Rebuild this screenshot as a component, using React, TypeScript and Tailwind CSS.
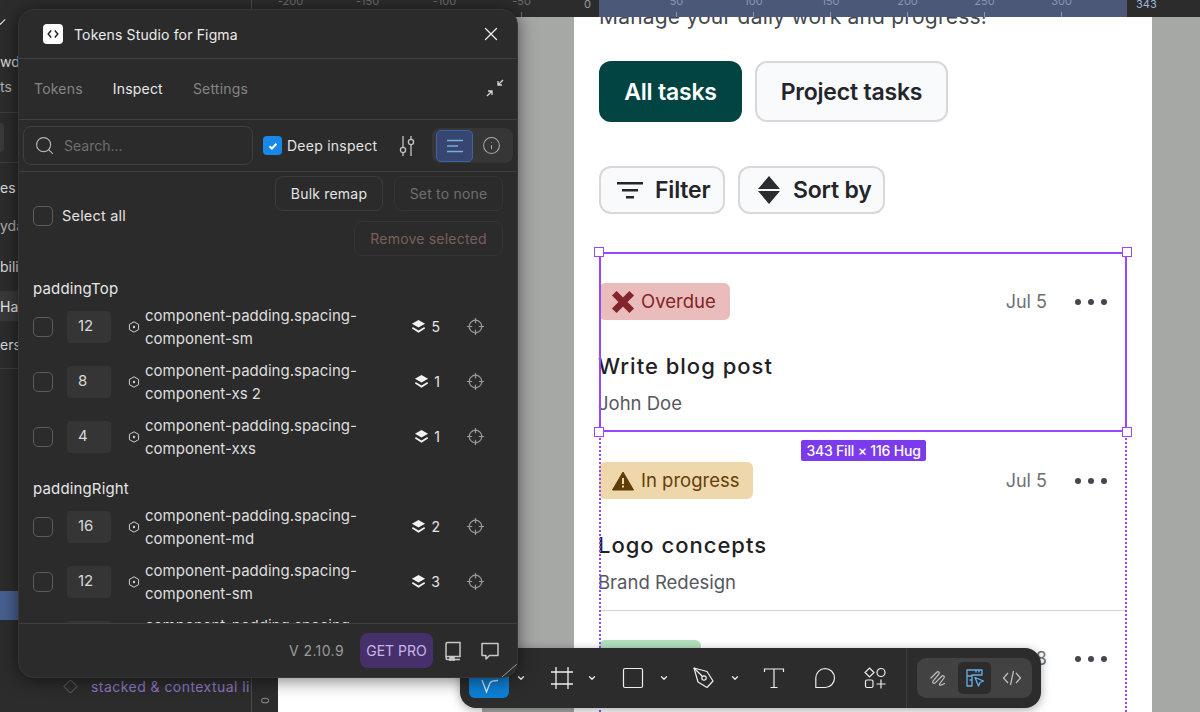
import { ChevronDown, Info, Search, X } from "lucide-react";
import type { ReactNode } from "react";

const font = "font-['Inter','Liberation_Sans',sans-serif]";

const sidebarScraps = [
  { text: "wd", className: "mt-[53px] h-[18px]" },
  { text: "ts", className: "mt-[7px] h-[18px]" },
];

const tokenGroups = [
  {
    title: "paddingTop",
    className: "mt-[22px]",
    rows: [
      { value: "12", token: "component-padding.spacing-component-sm", count: "5" },
      { value: "8", token: "component-padding.spacing-component-xs 2", count: "1" },
      { value: "4", token: "component-padding.spacing-component-xxs", count: "1" },
    ],
  },
  {
    title: "paddingRight",
    className: "mt-[14px]",
    rows: [
      { value: "16", token: "component-padding.spacing-component-md", count: "2" },
      { value: "12", token: "component-padding.spacing-component-sm", count: "3" },
      { value: "8", token: "component-padding.spacing-component-xs 2", count: "1" },
    ],
  },
];

function Checkbox() {
  return <span className="h-5 w-5 shrink-0 rounded-[5px] border-[1.5px] border-[#5c5c5c]" />;
}

function TokenRow({ value, token, count }: { value: string; token: string; count: string }) {
  return (
    <div className="flex h-[55px] items-center">
      <Checkbox />
      <div className="ml-[14px] flex h-8 w-11 shrink-0 items-center rounded bg-[#353535] pl-[11px] text-[15px] text-[#d8d8d8]">
        {value}
      </div>
      <svg viewBox="0 0 12 12" className="ml-[17px] h-3 w-3 shrink-0 text-[#d0d0d0]" fill="none" stroke="currentColor">
        <path d="M6 .8l4.6 2.6v5.2L6 11.2 1.4 8.6V3.4z" />
        <circle cx="6" cy="6" r="1.2" fill="currentColor" stroke="none" />
      </svg>
      <div className="ml-[5px] w-[240px] shrink-0 text-[15px] leading-[23px] text-[#dedede]">{token}</div>
      <div className="flex w-[55px] shrink-0 items-center justify-end gap-[5px] text-[14px] text-[#e6e6e6]">
        <svg viewBox="0 0 16 16" className="h-[15px] w-[15px]" fill="#f2f2f2">
          <path d="M8 1l7 4-7 4-7-4z" />
          <path d="M1.8 8.6L8 12.2l6.2-3.6 .8 1.4L8 14.6 1 10z" />
        </svg>
        {count}
      </div>
      <svg viewBox="0 0 20 20" className="ml-[26px] h-[19px] w-[19px] shrink-0 text-[#9a9a9a]" fill="none" stroke="currentColor" strokeWidth="1.3">
        <circle cx="10" cy="10" r="6.6" />
        <path d="M10 1v5.5M10 13.5V19M1 10h5.5M13.5 10H19" />
      </svg>
    </div>
  );
}

function TokensPlugin() {
  return (
    <div className="absolute left-[18px] top-[9px] z-30 flex h-[669px] w-[500px] flex-col overflow-hidden rounded-[16px] border border-[#363636] bg-[#2b2b2b] shadow-[0_2px_18px_rgba(0,0,0,0.55)]">
      <div className="flex h-[49px] shrink-0 items-center border-b border-[#3f3f3f] pl-6 pr-[15px]">
        <span className="flex h-5 w-5 items-center justify-center rounded-[4px] bg-white">
          <svg viewBox="0 0 12 12" className="h-3 w-3" fill="none" stroke="#222" strokeWidth="1.5">
            <path d="M4.2 2.6L1.2 6l3 3.4M7.8 2.6L10.8 6l-3 3.4" />
          </svg>
        </span>
        <span className="ml-[11px] text-[14px] tracking-[0.15px] text-[#ececec]">Tokens Studio for Figma</span>
        <X className="ml-auto h-[22px] w-[22px] text-[#eeeeee]" strokeWidth={1.4} />
      </div>

      <div className="flex h-[61px] shrink-0 items-center gap-[30px] border-b border-[#3f3f3f] pb-[2px] pl-[15px] pr-[12px] text-[14px] tracking-[0.2px] text-[#858585]">
        <span>Tokens</span>
        <span className="text-[#e8e8e8]">Inspect</span>
        <span>Settings</span>
        <svg viewBox="0 0 20 20" className="ml-auto h-5 w-5 text-[#d8d8d8]" fill="none" stroke="currentColor" strokeWidth="1.3">
          <path d="M18 2l-5 5M13 3v4h4M2 18l5-5M3 13h4v4" />
        </svg>
      </div>

      <div className="flex h-[52px] shrink-0 items-center border-b border-[#3f3f3f] pl-1">
        <div className="flex h-[39px] w-[230px] items-center rounded-lg border border-[#404040] pl-[10px] text-[14px] text-[#6f6f6f]">
          <Search className="h-[21px] w-[21px] text-[#b5b5b5]" strokeWidth={1.3} />
          <span className="ml-[9px]">Search...</span>
        </div>
        <span className="ml-[10px] flex h-[19px] w-[19px] items-center justify-center rounded-[4px] bg-[#1888e8]">
          <svg viewBox="0 0 12 12" className="h-3 w-3" fill="none" stroke="#fff" strokeWidth="2">
            <path d="M2.5 6.2l2.4 2.3 4.6-4.8" />
          </svg>
        </span>
        <span className="ml-[5px] text-[14px] tracking-[0.25px] text-[#e4e4e4]">Deep inspect</span>
        <svg viewBox="0 0 18 24" className="ml-[21px] h-6 w-[18px] text-[#c4c4c4]" fill="none" stroke="currentColor" strokeWidth="1.3">
          <path d="M5 2v11M5 19v3M13 2v3M13 11v11" />
          <circle cx="5" cy="16" r="2.6" />
          <circle cx="13" cy="8" r="2.6" />
        </svg>
        <div className="ml-[16px] flex h-[35px] w-[81px] items-center rounded-lg bg-[#363636] pl-1">
          <span className="flex h-[32px] w-[37px] items-center justify-center rounded-[5px] border border-[#3d64a4] bg-[#364670]">
            <svg viewBox="0 0 18 14" className="h-[14px] w-[18px]" fill="none" stroke="#7fa8dc" strokeWidth="1.4">
              <path d="M1 1.5h16M1 7h11M1 12.5h16" />
            </svg>
          </span>
          <Info className="ml-[9px] h-[19px] w-[19px] text-[#a8a8a8]" strokeWidth={1.3} />
        </div>
      </div>

      <div className="min-h-0 flex-1 overflow-hidden pl-[14px]">
        <div className="flex items-center justify-between pr-[14px] pt-[4px]">
          <div className="flex items-center gap-[9px] text-[14.5px] tracking-[0.2px] text-[#e2e2e2]">
            <Checkbox />
            Select all
          </div>
          <div className="flex flex-col items-end gap-[10px] text-[14px] tracking-[0.2px]">
            <div className="flex gap-[11px]">
              <span className="flex h-[35px] w-[108px] items-center justify-center rounded-lg border border-[#3d3d3d] text-[#e4e4e4]">Bulk remap</span>
              <span className="flex h-[35px] w-[109px] items-center justify-center rounded-lg border border-[#353535] text-[#6f6f6f]">Set to none</span>
            </div>
            <span className="flex h-[35px] w-[149px] items-center justify-center rounded-lg border border-[#353535] text-[#7a5f5c]">Remove selected</span>
          </div>
        </div>
        {tokenGroups.map((group) => (
          <div key={group.title} className={group.className}>
            <div className="h-[21px] text-[15px] leading-[21px] tracking-[0.15px] text-[#e6e6e6]">{group.title}</div>
            {group.rows.map((row) => (
              <TokenRow key={row.value + row.count} {...row} />
            ))}
          </div>
        ))}
      </div>

      <div className="flex h-[54px] shrink-0 items-center justify-end border-t border-[#3f3f3f] pr-[17px]">
        <span className="text-[14px] tracking-[0.4px] text-[#9a9a9a]">V 2.10.9</span>
        <span className="ml-[16px] flex h-[35px] w-[73px] items-center justify-center rounded-lg bg-[#46306c] text-[14px] text-[#c8b4e8]">GET PRO</span>
        <svg viewBox="0 0 18 20" className="ml-[11px] h-5 w-[18px] text-[#c8c8c8]" fill="none" stroke="currentColor" strokeWidth="1.5">
          <path d="M2 16V3a1.5 1.5 0 0 1 1.5-1.5H16v14H3.5A1.5 1.5 0 0 0 2 17a1.5 1.5 0 0 0 1.5 1.5H16" />
          <path d="M6 15.5v4l2-1 2 1v-4" fill="currentColor" />
        </svg>
        <svg viewBox="0 0 20 20" className="ml-[18px] h-5 w-5 text-[#c8c8c8]" fill="none" stroke="currentColor" strokeWidth="1.5">
          <path d="M2 2.5h16v12H9.5L6 18v-3.5H2z" strokeLinejoin="round" />
        </svg>
      </div>
      <svg viewBox="0 0 16 14" className="absolute bottom-0 right-0 h-[14px] w-4 text-[#9a9a9a]" fill="none" stroke="currentColor">
        <path d="M1 14L16 1" />
      </svg>
    </div>
  );
}

function Sidebar() {
  return (
    <div className="flex h-full w-[252px] shrink-0 flex-col overflow-hidden border-r border-[#4c4c4c] bg-[#2c2c2c] text-[14px] text-[#dcdcdc]">
      <svg viewBox="0 0 10 10" className="ml-[-2px] mt-[17px] h-2 w-2 shrink-0 text-[#dcdcdc]" fill="none" stroke="currentColor" strokeWidth="1.5">
        <path d="M0 6l3 3 6-6" />
      </svg>
      <div className="-mt-[25px]">
        {sidebarScraps.map((scrap) => (
          <div key={scrap.text} className={`${scrap.className} leading-[18px] ${scrap.text === "ts" ? "text-[#b0b0b0]" : ""}`}>
            {scrap.text}
          </div>
        ))}
      </div>
      <div className="mt-[16px] h-px w-[18px] bg-[#3f3f3f]" />
      <div className="mt-[10px] h-[29px] w-1 rounded-r bg-[#3a3a3a]" />
      <div className="mt-[10px] h-px w-[18px] bg-[#3f3f3f]" />
      <div className="mt-[16px] h-[18px] leading-[18px]">es</div>
      <div className="mt-[20px] h-[18px] leading-[18px] text-[#b0b0b0]">yda</div>
      <div className="mt-[23px] h-[18px] leading-[18px]">bili</div>
      <div className="mt-[15px] flex h-[30px] w-[18px] items-center bg-[#3a3a3a] text-[#e8e8e8]">Ha</div>
      <div className="mt-[15px] h-[18px] leading-[18px]">ers</div>
      <div className="mt-[14px] h-px w-[18px] bg-[#3f3f3f]" />
      <div className="mt-[222px] h-[29px] w-[18px] bg-[#47608f]" />
      <div className="mt-[56px] flex items-center pl-[63px] text-[14px] tracking-[0.45px] text-[#8f76c4]">
        <svg viewBox="0 0 16 16" className="h-[15px] w-[15px] shrink-0 text-[#6f6a80]" fill="none" stroke="currentColor">
          <path d="M8 1l7 7-7 7-7-7z" />
        </svg>
        <span className="ml-[13px] whitespace-nowrap">stacked &amp; contextual lis</span>
      </div>
    </div>
  );
}

function RulerCell({ label }: { label: string }) {
  return (
    <div className="flex h-[17px] w-[77px] shrink-0 flex-col items-center justify-between overflow-hidden">
      <span className="-mt-[5px] text-[11px] leading-[13px]">{label}</span>
      <span className="h-[5px] w-px bg-current" />
    </div>
  );
}

function TopRuler() {
  return (
    <div className="relative z-10 flex h-[17px] shrink-0 bg-[#2c2c2c] text-[#6e6e6e]">
      {["-200", "-150", "-100", "-50"].map((label) => (
        <RulerCell key={label} label={label} />
      ))}
      <div className="flex h-[17px] w-[39px] justify-end overflow-hidden pr-[8px] text-[11px] leading-[8px] text-[#9a9a9a]">0</div>
      <div className="flex h-[17px] w-[528px] bg-[#4b5878] pl-[39px] text-[#8b96b0]">
        {["50", "100", "150", "200", "250", "300"].map((label) => (
          <RulerCell key={label} label={label} />
        ))}
      </div>
      <div className="overflow-hidden pl-[9px] text-[11px] leading-[8px] text-[#9fb6de]">343</div>
    </div>
  );
}

function TaskCard({
  badge,
  badgeClass,
  icon,
  title,
  subtitle,
  className,
}: {
  badge: string;
  badgeClass: string;
  icon: ReactNode;
  title: string;
  subtitle: string;
  className: string;
}) {
  return (
    <div className={className}>
      <div className="flex items-center pr-5">
        <div className={`flex h-[37px] items-center gap-[6px] rounded-[6px] pl-3 text-[18.5px] ${badgeClass}`}>
          {icon}
          {badge}
        </div>
        <span className="ml-auto text-[18px] text-[#6b6f76]">Jul 5</span>
        <Dots />
      </div>
      <div className="-ml-px mt-[31px] h-[30px] text-[22px] font-medium leading-[30px] tracking-[1px] text-[#1f2125]">{title}</div>
      <div className="-ml-px mt-[9px] h-[26px] text-[18.5px] leading-[26px] text-[#55585e]">{subtitle}</div>
    </div>
  );
}

function Dots() {
  return (
    <span className="ml-[28px] flex gap-[7px]">
      <span className="h-[6px] w-[6px] rounded-full bg-[#44474d]" />
      <span className="h-[6px] w-[6px] rounded-full bg-[#44474d]" />
      <span className="h-[6px] w-[6px] rounded-full bg-[#44474d]" />
    </span>
  );
}

function Handle({ className }: { className: string }) {
  return <span className={`absolute h-[10px] w-[10px] border border-[#9747ff] bg-white ${className}`} />;
}

function PhoneFrame() {
  return (
    <div className="relative ml-[296px] h-[720px] w-[578px] bg-white px-[25px] pt-[2px]">
      <p className="-mt-[17px] h-[30px] whitespace-nowrap text-[21px] leading-[30px] tracking-[0.2px] text-[#44474d]">
        Manage your daily work and progress!
      </p>
      <div className="mt-[29px] flex gap-[13px] text-[23px] font-semibold tracking-[-0.2px]">
        <button className="h-[61px] w-[143px] rounded-[12px] bg-[#024442] pt-[2px] text-white">All tasks</button>
        <button className="h-[61px] w-[193px] rounded-[12px] border-2 border-[#d6d8dc] bg-[#f9fafc] pt-[2px] text-[#23252a]">Project tasks</button>
      </div>
      <div className="mt-[44px] flex gap-[13px] text-[23px] font-semibold tracking-[-0.2px] text-[#23252a]">
        <button className="flex h-[48px] w-[126px] items-center gap-[12px] rounded-[12px] border-2 border-[#d6d8dc] bg-[#f9fafc] pl-[16px]">
          <svg viewBox="0 0 26 20" className="h-5 w-[26px]" fill="#23252a">
            <path d="M0 2h26v2.4H0zM5 9h16v2.4H5zM9 16h8v2.4H9z" />
          </svg>
          Filter
        </button>
        <button className="flex h-[48px] w-[147px] items-center gap-[13px] rounded-[12px] border-2 border-[#d6d8dc] bg-[#f9fafc] pl-[18px]">
          <svg viewBox="0 0 22 28" className="h-7 w-[22px]" fill="#2a2c31">
            <path d="M11 0l11 13H0zM0 15h22L11 28z" />
          </svg>
          Sort by
        </button>
      </div>

      <div className="relative mt-[38px]">
        <TaskCard
          className="h-[180px] pt-[31px]"
          badge="Overdue"
          badgeClass="w-[131px] bg-[#eabcbc] text-[#7f2528]"
          icon={
            <svg viewBox="0 0 22 22" className="h-6 w-6" fill="none" stroke="#83252a" strokeWidth="6">
              <path d="M3 3l16 16M19 3L3 19" />
            </svg>
          }
          title="Write blog post"
          subtitle="John Doe"
        />
        <TaskCard
          className="h-[179px] border-b border-[#cfd0d2] pt-[30px]"
          badge="In progress"
          badgeClass="w-[154px] bg-[#eed7ab] text-[#65400c]"
          icon={
            <svg viewBox="0 0 22 20" className="h-5 w-6">
              <path d="M11 1l10.5 18H.5z" fill="#5e3c08" stroke="#5e3c08" strokeLinejoin="round" />
              <path d="M10 7h2v6h-2zM10 14.5h2v2h-2z" fill="#eed7ab" />
            </svg>
          }
          title="Logo concepts"
          subtitle="Brand Redesign"
        />
        <div className="flex items-start pr-5 pt-[29px]">
          <div className="flex h-[40px] w-[102px] items-center rounded-[6px] bg-[#b2e0bd] pl-3">
            <span className="h-6 w-6 rounded-full bg-[#1d4d2c]" />
          </div>
          <span className="ml-auto mt-[5px] text-[18px] text-[#6b6f76]">Jul 8</span>
          <span className="mt-[16px]">
            <Dots />
          </span>
        </div>

        <div className="pointer-events-none absolute inset-x-0 top-0 h-[180px] border-2 border-[#9747ff]">
          <Handle className="-left-[7px] -top-[7px]" />
          <Handle className="-right-[7px] -top-[7px]" />
          <Handle className="-bottom-[7px] -left-[7px]" />
          <Handle className="-bottom-[7px] -right-[7px]" />
        </div>
        <div className="absolute -bottom-[60px] left-0 top-[186px] border-l-2 border-dotted border-[#9747ff]" />
        <div className="absolute -bottom-[60px] right-0 top-[186px] border-l-2 border-dotted border-[#9747ff]" />
        <div className="absolute left-[202px] top-[188px] flex h-[21px] w-[125px] items-center justify-center whitespace-nowrap rounded-[2px] bg-[#7c3aed] text-[14px] font-medium tracking-[-0.2px] text-white">
          343 Fill × 116 Hug
        </div>
      </div>
    </div>
  );
}

function Tool({ className, children }: { className: string; children: ReactNode }) {
  return <span className={`flex h-[22px] w-[22px] shrink-0 items-center justify-center text-[#eeeeee] ${className}`}>{children}</span>;
}

function Chevron({ className }: { className: string }) {
  return <ChevronDown className={`h-[10px] w-[10px] shrink-0 text-[#eeeeee] ${className}`} strokeWidth={3} />;
}

function Toolbar() {
  return (
    <div className="absolute left-[460px] top-[648px] z-20 flex h-[60px] w-[581px] items-center rounded-[16px] bg-[#2c2c2c] pl-[9px] shadow-[0_2px_10px_rgba(0,0,0,0.35)]">
      <span className="mt-[2px] flex h-[38px] w-10 shrink-0 items-end justify-center rounded-[6px] bg-[#0d7fd4] pb-1">
        <svg viewBox="0 0 24 16" className="h-4 w-6" fill="none" stroke="#d9ecfb" strokeWidth="1.3">
          <path d="M5 2l4.5 12 3.5-9c1-2 4-2.5 8-2.5" />
        </svg>
      </span>
      <Chevron className="ml-[7px]" />
      <Tool className="ml-[25px]">
        <svg viewBox="0 0 22 22" className="h-[22px] w-[22px]" fill="none" stroke="currentColor" strokeWidth="1.3">
          <path d="M5 0v22M17 0v22M0 5h22M0 17h22" />
        </svg>
      </Tool>
      <Chevron className="ml-[14px]" />
      <Tool className="ml-[25px]">
        <svg viewBox="0 0 22 22" className="h-[22px] w-[22px]" fill="none" stroke="currentColor" strokeWidth="1.2">
          <rect x="1.5" y="1.5" width="19" height="19" rx="1.5" />
        </svg>
      </Tool>
      <Chevron className="ml-[15px]" />
      <Tool className="ml-[24px]">
        <svg viewBox="0 0 22 22" className="h-[22px] w-[22px]" fill="none" stroke="currentColor" strokeWidth="1.2" strokeLinejoin="round">
          <path d="M1 1l13 3.5 6 9.5-6 6.5-9-5.5z" />
          <circle cx="11" cy="11" r="2.2" />
          <path d="M1 1l8.5 8.5" />
        </svg>
      </Tool>
      <Chevron className="ml-[15px]" />
      <Tool className="ml-[23px]">
        <svg viewBox="0 0 22 22" className="h-[22px] w-[22px]" fill="none" stroke="currentColor" strokeWidth="1.2">
          <path d="M1.5 5V2h19v3M11 2v18M7.5 20.5h7" />
        </svg>
      </Tool>
      <Tool className="ml-[29px]">
        <svg viewBox="0 0 22 22" className="h-[22px] w-[22px]" fill="none" stroke="currentColor" strokeWidth="1.2">
          <path d="M11 1.5a9.5 9.5 0 0 1 0 19H1.8V11A9.5 9.5 0 0 1 11 1.5z" strokeLinejoin="round" />
        </svg>
      </Tool>
      <Tool className="ml-[28px]">
        <svg viewBox="0 0 22 22" className="h-[22px] w-[22px]" fill="none" stroke="currentColor" strokeWidth="1.2">
          <path d="M5.5 1l4.5 4.5L5.5 10 1 5.5z" />
          <circle cx="17" cy="5.5" r="4" />
          <rect x="1.5" y="13" width="7.5" height="7.5" rx="1.5" />
          <path d="M17 12.5v9M12.5 17h9" />
        </svg>
      </Tool>
      <span className="ml-[20px] h-full w-px bg-[#3f3f3f]" />
      <div className="ml-[10px] flex h-10 w-[115px] items-center rounded-[9px] bg-[#424242]">
        <span className="flex w-[41px] justify-center">
          <svg viewBox="0 0 20 20" className="h-5 w-5 text-[#c2c2c2]" fill="none" stroke="currentColor" strokeWidth="1.2" strokeLinecap="round">
            <path d="M3 10l6-6c1.2-1 3 .4 2 2l-6 7c-1 1.6 1 3 2.2 1.8L14 8c1.2-1 3 .4 2 2l-4.5 6c-.5 1.2 1 1.5 2 1l3-1.5" />
          </svg>
        </span>
        <span className="flex h-8 w-[33px] items-center justify-center rounded-[5px] bg-[#2c2c2c]">
          <svg viewBox="0 0 20 20" className="h-5 w-5 text-[#64afe6]" fill="none" stroke="currentColor" strokeWidth="1.3" strokeLinejoin="round">
            <path d="M2 8V2h15v5H7v11H2V8h5M4.5 12H7M11 2v2.5M14 2v2.5" />
            <path d="M10 9.5l8.5 3.5-3.5 1.5-1.5 3.5z" />
          </svg>
        </span>
        <span className="flex w-[41px] justify-center">
          <svg viewBox="0 0 20 16" className="h-4 w-5 text-[#c2c2c2]" fill="none" stroke="currentColor" strokeWidth="1.2">
            <path d="M6 3L1.5 8 6 13M14 3l4.5 5-4.5 5M11.5 1L8.5 15" />
          </svg>
        </span>
      </div>
    </div>
  );
}

export default function App() {
  return (
    <div className={`relative flex h-[712px] w-[1200px] overflow-hidden ${font}`}>
      <Sidebar />
      <div className="flex min-w-0 flex-1 flex-col">
        <TopRuler />
        <div className="relative flex min-h-0 flex-1 overflow-hidden bg-[#a6a8a6]">
          <div className="relative z-10 flex w-[26px] shrink-0 items-end justify-center bg-[#2c2c2c] pb-[5px]">
            <span className="-rotate-90 text-[11px] leading-[13px] text-[#8a8a8a]">0</span>
          </div>
          <div className="absolute bottom-0 left-[26px] top-[300px] w-[204px] bg-white" />
          <div className="absolute inset-0 left-[26px]">
            <PhoneFrame />
          </div>
        </div>
      </div>
      <TokensPlugin />
      <Toolbar />
    </div>
  );
}
